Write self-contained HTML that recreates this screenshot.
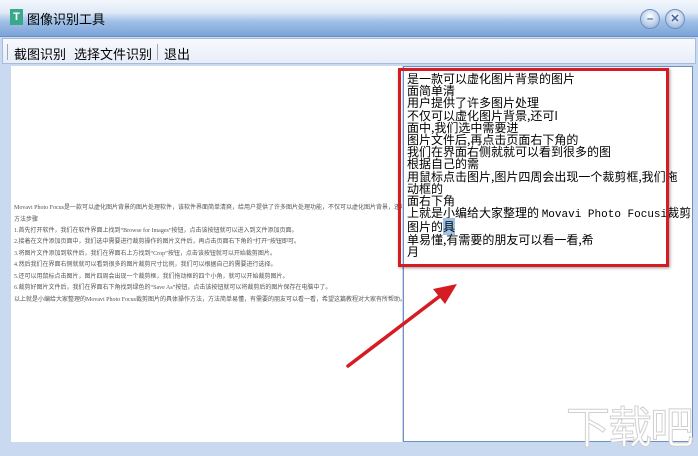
<!DOCTYPE html>
<html><head><meta charset="utf-8"><style>
*{margin:0;padding:0;box-sizing:border-box}
body{width:698px;height:447px;overflow:hidden;background:#c9daf0;font-family:"Liberation Sans","Noto Sans CJK SC",sans-serif;position:relative}
.title{position:absolute;left:0;top:0;width:698px;height:37px;background:linear-gradient(#f4f8fd 0%,#dfe9f7 35%,#9fbfe6 60%,#7aa3d9 100%);border-bottom:1px solid #6d8fc4}
.logo{position:absolute;left:10px;top:9px;width:13px;height:16px;background:#3aa88a;color:#fff;font-size:11px;font-weight:bold;text-align:center;line-height:16px}
.tt{position:absolute;left:27px;top:9px;font-size:13px;color:#000}
.btn{position:absolute;top:9px;width:20px;height:20px;border-radius:50%;background:radial-gradient(circle at 50% 35%,#fff,#b8cce8 60%,#7f9fcc);border:1px solid #6f8fbf;color:#3c5f9a;font-size:11px;font-weight:bold;text-align:center;line-height:18px}
.tb{position:absolute;left:2px;top:38px;width:694px;height:26px;background:linear-gradient(#f7f9fd,#e8eef8);border:1px solid #a7bcdc;font-size:13px;color:#000}
.tb span{position:absolute;top:5px}
.sep{position:absolute;top:5px;width:1px;height:16px;background:#a0a8b8}
.left{position:absolute;left:11px;top:66px;width:391px;height:376px;background:#fff;overflow:hidden}
.lt{position:absolute;left:3px;font-size:6px;color:#555;white-space:nowrap;font-family:"Liberation Serif","Noto Sans CJK SC",serif}
.right{position:absolute;left:403px;top:66px;width:290px;height:376px;background:#fff;border:1px solid #6d8fc4}
.rt{position:absolute;left:407px;top:73px;font-size:12px;line-height:12.2px;color:#000;white-space:nowrap;font-family:"Noto Sans CJK SC",sans-serif}
.box{position:absolute;left:398px;top:68px;width:271px;height:199px;border:3px solid #d51c22;box-shadow:1px 1px 3px rgba(0,0,0,.4)}
.wm{position:absolute;left:566px;top:392px;font-size:44px;color:#fff;-webkit-text-stroke:1px #d0d0d0;letter-spacing:-2px;font-family:"Noto Sans CJK SC",sans-serif}
</style></head><body>
<div class="title"><div class="logo">T</div><div class="tt">图像识别工具</div>
<div class="btn" style="left:640px">–</div><div class="btn" style="left:665px">✕</div></div>
<div class="tb"><div class="sep" style="left:4px"></div><span style="left:11px">截图识别</span><span style="left:71px">选择文件识别</span><div class="sep" style="left:154px"></div><span style="left:161px">退出</span></div>
<div class="left">
<div class="lt" style="top:136px">Movavi Photo Focus是一款可以虚化图片背景的图片处理软件，该软件界面简单清爽，给用户提供了许多图片处理功能，不仅可以虚化图片背景，还可</div>
<div class="lt" style="top:148px">方法步骤</div>
<div class="lt" style="top:159px">1.首先打开软件，我们在软件界面上找到“Browse for Images”按钮，点击该按钮就可以进入到文件添加页面。</div>
<div class="lt" style="top:170px">2.接着在文件添加页面中，我们选中需要进行裁剪操作的图片文件后，再点击页面右下角的“打开”按钮即可。</div>
<div class="lt" style="top:182px">3.将图片文件添加到软件后，我们在界面右上方找到“Crop”按钮，点击该按钮就可以开始裁剪图片。</div>
<div class="lt" style="top:193px">4.然后我们在界面右侧就就可以看到很多的图片裁剪尺寸比例，我们可以根据自己的需要进行选择。</div>
<div class="lt" style="top:205px">5.还可以用鼠标点击图片，图片四周会出现一个裁剪框，我们拖动框的四个小角，就可以开始裁剪图片。</div>
<div class="lt" style="top:216px">6.裁剪好图片文件后，我们在界面右下角找到绿色的“Save As”按钮，点击该按钮就可以将裁剪后的图片保存在电脑中了。</div>
<div class="lt" style="top:228px">以上就是小编给大家整理的Movavi Photo Focus裁剪图片的具体操作方法，方法简单易懂，有需要的朋友可以看一看，希望这篇教程对大家有所帮助。</div>
</div>
<div class="right"></div>
<div class="wm">下载吧</div>
<div class="rt">是一款可以虚化图片背景的图片<br>面简单清<br>用户提供了许多图片处理<br>不仅可以虚化图片背景,还可I<br>面中,我们选中需要进<br>图片文件后,再点击页面右下角的<br>我们在界面右侧就就可以看到很多的图<br>根据自己的需<br>用鼠标点击图片,图片四周会出现一个裁剪框,我们拖<br>动框的<br>面右下角<br>上就是小编给大家整理的 <span style="font-family:'Liberation Mono',monospace;font-size:11px">Movavi Photo Focusi</span>裁剪<br>图片的<span style="background:#9cc3e8">具</span><br>单易懂,有需要的朋友可以看一看,希<br>月</div>
<div class="box"></div>
<svg style="position:absolute;left:0;top:0" width="698" height="447"><line x1="348" y1="366" x2="440" y2="296" stroke="#d51c22" stroke-width="3.5" stroke-linecap="round"/><polygon points="457,284 433,289 445,304" fill="#d51c22"/></svg>
</body></html>
